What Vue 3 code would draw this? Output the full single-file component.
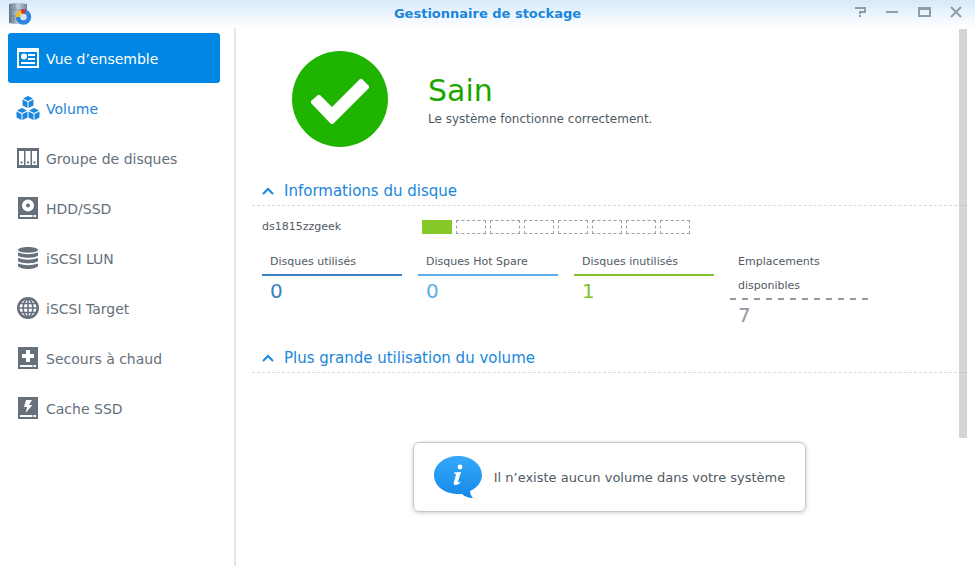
<template>
  <div class="window">
    <header class="titlebar">
      <svg class="app-icon" viewBox="0 0 24 22" aria-hidden="true">
        <defs>
          <linearGradient id="steel" x1="0" x2="1">
            <stop offset="0" stop-color="#5f7387" />
            <stop offset="0.5" stop-color="#c3d0dc" />
            <stop offset="1" stop-color="#6f8194" />
          </linearGradient>
        </defs>
        <path d="M1 1Q10 -1 19 1V20Q10 22 1 20Z" fill="url(#steel)" />
        <path d="M1 7H19M1 13H19M7 1V7M12 7V13M6 13V20" stroke="#71828f" stroke-width="0.7" fill="none" />
        <circle cx="15.500" cy="14" r="5.500" fill="none" stroke="#2f86e0" stroke-width="4.500" />
        <path d="M10 14A5.500 5.500 0 0 1 13.500 8.900" fill="none" stroke="#f3bd2c" stroke-width="4.500" />
        <path d="M13.500 8.900A5.500 5.500 0 0 1 17.500 8.900" fill="none" stroke="#d8322c" stroke-width="4.500" />
        <circle cx="15.500" cy="14" r="3.200" fill="#d5e6f5" />
      </svg>
      <h1>Gestionnaire de stockage</h1>
      <div class="controls">
        <button v-for="control in controls" :key="control.label" type="button" :aria-label="control.label">
          <svg viewBox="0 0 14 14"><path :d="control.path" /></svg>
        </button>
      </div>
    </header>

    <div class="body">
      <nav class="sidebar">
        <button
          v-for="item in items"
          :key="item.id"
          type="button"
          class="nav-item"
          :class="{ active: item.id === current, hover: item.id === 'volume' }"
          @click="current = item.id"
        >
          <svg viewBox="0 0 24 24" aria-hidden="true">
            <path v-for="(shape, i) in item.shapes" :key="i" :d="shape" fill="currentColor" fill-rule="evenodd" />
            <path v-if="item.lines" :d="item.lines" fill="none" stroke="currentColor" stroke-width="1.6" />
          </svg>
          <span>{{ item.label }}</span>
        </button>
      </nav>

      <main class="content">
        <section class="status">
          <svg class="status-icon" viewBox="0 0 96 96" aria-hidden="true">
            <circle cx="48" cy="48" r="48" fill="#1fb400" />
            <path d="M19 50L26 44L28 44L40 56L68 28L70 28L77 35L77 37L41 73L39 73L19 52Z" fill="#fff" />
          </svg>
          <div class="status-body">
            <p class="status-title">Sain</p>
            <p class="status-text">Le système fonctionne correctement.</p>
          </div>
        </section>

        <section>
          <h2>
            <button type="button" class="toggle" :aria-expanded="diskOpen" @click="diskOpen = !diskOpen">
              <svg viewBox="0 0 12 8" aria-hidden="true"><path d="M1 7L6 2L11 7" /></svg>
              Informations du disque
            </button>
          </h2>
          <div v-show="diskOpen" class="disk-info">
            <div class="host">
              <span class="host-name">ds1815zzgeek</span>
              <div class="slots">
                <span v-for="n in 8" :key="n" class="slot" :class="{ used: n === 1 }"></span>
              </div>
            </div>
            <dl class="stats">
              <div v-for="stat in stats" :key="stat.label" class="stat" :class="stat.kind">
                <dt><span>{{ stat.label }}</span></dt>
                <dd>{{ stat.value }}</dd>
              </div>
            </dl>
          </div>
        </section>

        <section>
          <h2>
            <button type="button" class="toggle" :aria-expanded="usageOpen" @click="usageOpen = !usageOpen">
              <svg viewBox="0 0 12 8" aria-hidden="true"><path d="M1 7L6 2L11 7" /></svg>
              Plus grande utilisation du volume
            </button>
          </h2>
          <div v-show="usageOpen" class="notice">
            <svg viewBox="0 0 48 44" aria-hidden="true">
              <defs>
                <linearGradient id="bubble" x1="0" y1="0" x2="0" y2="1">
                  <stop offset="0" stop-color="#36a9fb" />
                  <stop offset="1" stop-color="#1488e8" />
                </linearGradient>
              </defs>
              <path d="M24 1C37 1 48 9 48 20C48 27 43 33 36 36Q36 40 39 43Q32 43 28 39C12 40 0 32 0 20C0 9 11 1 24 1Z" fill="url(#bubble)" />
              <circle cx="26" cy="12" r="2.4" fill="#fff" />
              <path d="M20 17.5L27 17L24 26.5Q24 28 27 26.5Q24.500 30 21.500 30Q19 30 20 27L22 19.500Q22 18.500 20 18.500Z" fill="#fff" />
            </svg>
            <p>Il n’existe aucun volume dans votre système</p>
          </div>
        </section>
        <div class="scroll-thumb"></div>
      </main>
    </div>
  </div>
</template>

<script setup>
import { ref } from 'vue';

const current = ref('overview');
const diskOpen = ref(true);
const usageOpen = ref(true);

const controls = [
  { label: 'Aide', path: 'M2 3H12V7H7V9M7 10V12' },
  { label: 'Réduire', path: 'M1 7H13' },
  { label: 'Agrandir', path: 'M2 3H13V11H2ZM2 4H13' },
  { label: 'Fermer', path: 'M2 2L12 12M12 2L2 12' }
];

// Lower part of the drive icons: a light tray with a small led
const tray = 'M4 19H20V21H4ZM16 19.500H18V20.500H16Z';

const items = [
  {
    id: 'overview',
    label: 'Vue d’ensemble',
    shapes: [
      'M1 2H23V22H1ZM3 6V20H21V6Z',
      'M5 10.500A3 3 0 1 1 11 10.500A3 3 0 1 1 5 10.500ZM12 8H19V10H12ZM12 12H19V14H12ZM5 16H19V18H5Z'
    ]
  },
  {
    id: 'volume',
    label: 'Volume',
    shapes: [
      'M12 0L17 2.500L12 5L7 2.500ZM6.500 3.500L11.500 6V12L6.500 9.500ZM17.500 3.500L12.500 6V12L17.500 9.500Z',
      'M6 12L11 14.500L6 17L1 14.500ZM0.500 15.500L5.500 18V24L0.500 21.500ZM11.500 15.500L6.500 18V24L11.500 21.500Z',
      'M18 12L23 14.500L18 17L13 14.500ZM12.500 15.500L17.500 18V24L12.500 21.500ZM23.500 15.500L18.500 18V24L23.500 21.500Z'
    ]
  },
  {
    id: 'group',
    label: 'Groupe de disques',
    shapes: ['M1 2H23V22H1ZM3 5V19H8V5ZM9.500 5V19H14.500V5ZM16 5V19H21V5Z', 'M4.500 15.500H6.500V17.500H4.500ZM11 15.500H13V17.500H11ZM17.500 15.500H19.500V17.500H17.500Z']
  },
  {
    id: 'hdd',
    label: 'HDD/SSD',
    shapes: [`M2 1H22V23H2ZM6 9.500A6 6 0 1 0 18 9.500A6 6 0 1 0 6 9.500ZM10 9.500A2 2 0 1 1 14 9.500A2 2 0 1 1 10 9.500Z${tray}`]
  },
  {
    id: 'lun',
    label: 'iSCSI LUN',
    shapes: [
      'M2 4C2 0 22 0 22 4C22 7.500 2 7.500 2 4Z',
      'M2 6.500Q12 10 22 6.500V9.500C20 12.500 4 12.500 2 9.500Z',
      'M2 12Q12 15.500 22 12V15C20 18 4 18 2 15Z',
      'M2 17.500Q12 21 22 17.500V20C20 24 4 24 2 20Z'
    ]
  },
  {
    id: 'target',
    label: 'iSCSI Target',
    shapes: ['M1 12A11 11 0 1 1 23 12A11 11 0 1 1 1 12ZM3.500 12A8.500 8.500 0 1 0 20.500 12A8.500 8.500 0 1 0 3.500 12Z'],
    lines: 'M12 2V22M2 12H22M4 7.500H20M4 16.500H20M12 2C5.500 7 5.500 17 12 22M12 2C18.500 7 18.500 17 12 22'
  },
  {
    id: 'spare',
    label: 'Secours à chaud',
    shapes: [`M2 1H22V23H2ZM10 4V8H6V12H10V16H14V12H18V8H14V4Z${tray}`]
  },
  {
    id: 'cache',
    label: 'Cache SSD',
    shapes: [`M2 1H22V23H2ZM10 4L8 11H11L9.500 17L16.500 9H13L16 4Z${tray}`]
  }
];

const stats = [
  { label: 'Disques utilisés', value: 0, kind: 'in-use' },
  { label: 'Disques Hot Spare', value: 0, kind: 'spare' },
  { label: 'Disques inutilisés', value: 1, kind: 'unused' },
  { label: 'Emplacements disponibles', value: 7, kind: 'free' }
];
</script>

<style>
body {
  margin: 0;
  background: #fff;
}
</style>

<style scoped>
.window {
  display: flex;
  flex-direction: column;
  min-height: 100vh;
  font-family: Verdana, "DejaVu Sans", sans-serif;
  font-size: 13px;
  color: #505a64;
}

h1,
h2,
p,
dl,
dd {
  margin: 0;
}

button {
  padding: 0;
  border: 0;
  background: none;
  font: inherit;
  color: inherit;
  cursor: pointer;
}

.titlebar {
  display: grid;
  grid-template-columns: 120px 1fr 120px;
  align-items: center;
  height: 28px;
  background: linear-gradient(#d6eafa, #fff);
}

.app-icon {
  width: 24px;
  height: 24px;
  margin-left: 8px;
}

h1 {
  font-size: 13px;
  line-height: 26px;
  text-align: center;
  color: #1a86dc;
}

.controls {
  display: flex;
  justify-content: flex-end;
  gap: 18px;
  padding: 0 12px 4px 0;
}

.controls button,
.controls svg {
  display: block;
  width: 14px;
  height: 14px;
}

.controls path {
  fill: none;
  stroke: #8d9dab;
  stroke-width: 2;
}

.body {
  display: flex;
  flex: 1;
}

.sidebar {
  flex: 0 0 212px;
  padding: 5px 14px 0 8px;
  border-right: 2px solid #e3e5e8;
}

.nav-item {
  display: flex;
  align-items: center;
  gap: 6px;
  width: 100%;
  height: 50px;
  padding-left: 8px;
  border-radius: 3px;
  font-size: 14px;
  color: #65707b;
}

.nav-item svg {
  width: 24px;
  height: 24px;
}

.nav-item span {
  padding-top: 2px;
}

.nav-item.hover {
  color: #1a86dc;
}

.nav-item.active {
  background: #0086e5;
  color: #fff;
}

.content {
  position: relative;
  flex: 1;
  padding: 0 8px 0 16px;
}

.status {
  display: flex;
  align-items: center;
  gap: 40px;
  padding: 23px 0 30px 40px;
}

.status-icon {
  width: 96px;
  height: 96px;
}

.status-body {
  padding-top: 4px;
}

.status-title {
  font-size: 30px;
  line-height: 36px;
  color: #1ba600;
}

.status-text {
  font-size: 12px;
  line-height: 20px;
}

h2 {
  border-bottom: 1px dashed #d5dbe2;
  font-size: 15px;
  font-weight: normal;
  line-height: 28px;
  color: #1a86dc;
}

.toggle {
  display: flex;
  align-items: center;
  gap: 10px;
  padding-left: 10px;
}

.toggle svg {
  width: 12px;
  height: 8px;
}

.toggle path {
  fill: none;
  stroke: currentColor;
  stroke-width: 2;
}

.disk-info {
  padding: 9px 10px 14px;
  font-size: 11px;
  line-height: 24px;
}

.host {
  display: flex;
  align-items: center;
}

.host-name {
  width: 160px;
}

.slots {
  display: flex;
  gap: 4px;
}

.slot {
  box-sizing: border-box;
  width: 30px;
  height: 14px;
  border: 1px dashed #9aa0a8;
}

.slot.used {
  border: 0;
  background: #86c928;
}

.stats {
  display: flex;
  align-items: flex-start;
  gap: 16px;
  padding-top: 11px;
}

.stat {
  width: 140px;
}

.stat dt {
  padding: 0 8px;
  border-bottom: 2px solid;
}

.stat dt span {
  color: #505a64;
}

.stat dd {
  padding: 0 8px;
  font-size: 20px;
  line-height: 30px;
}

.in-use {
  color: #3b80c4;
}

.spare {
  color: #5eaee6;
}

.unused {
  color: #82c22e;
}

.free {
  color: #8f9aa5;
}

.stat.free dt {
  padding-bottom: 2px;
  border-bottom: 0;
  background: repeating-linear-gradient(90deg, currentColor 0 6px, transparent 6px 12px) bottom / 100% 2px no-repeat;
}

.notice {
  display: flex;
  align-items: center;
  gap: 12px;
  box-sizing: border-box;
  width: fit-content;
  min-height: 70px;
  margin: 69px auto 0;
  padding: 0 20px;
  border: 1px solid #c4c8cc;
  border-radius: 6px;
  box-shadow: 0 1px 4px rgba(0, 0, 0, 0.2);
}

.notice svg {
  width: 48px;
  height: 44px;
}

/* Overlay thumb, floats above the section dividers */
.scroll-thumb {
  position: absolute;
  top: 1px;
  right: 8px;
  width: 8px;
  height: 76%;
  background: rgba(150, 150, 155, 0.4);
}
</style>
